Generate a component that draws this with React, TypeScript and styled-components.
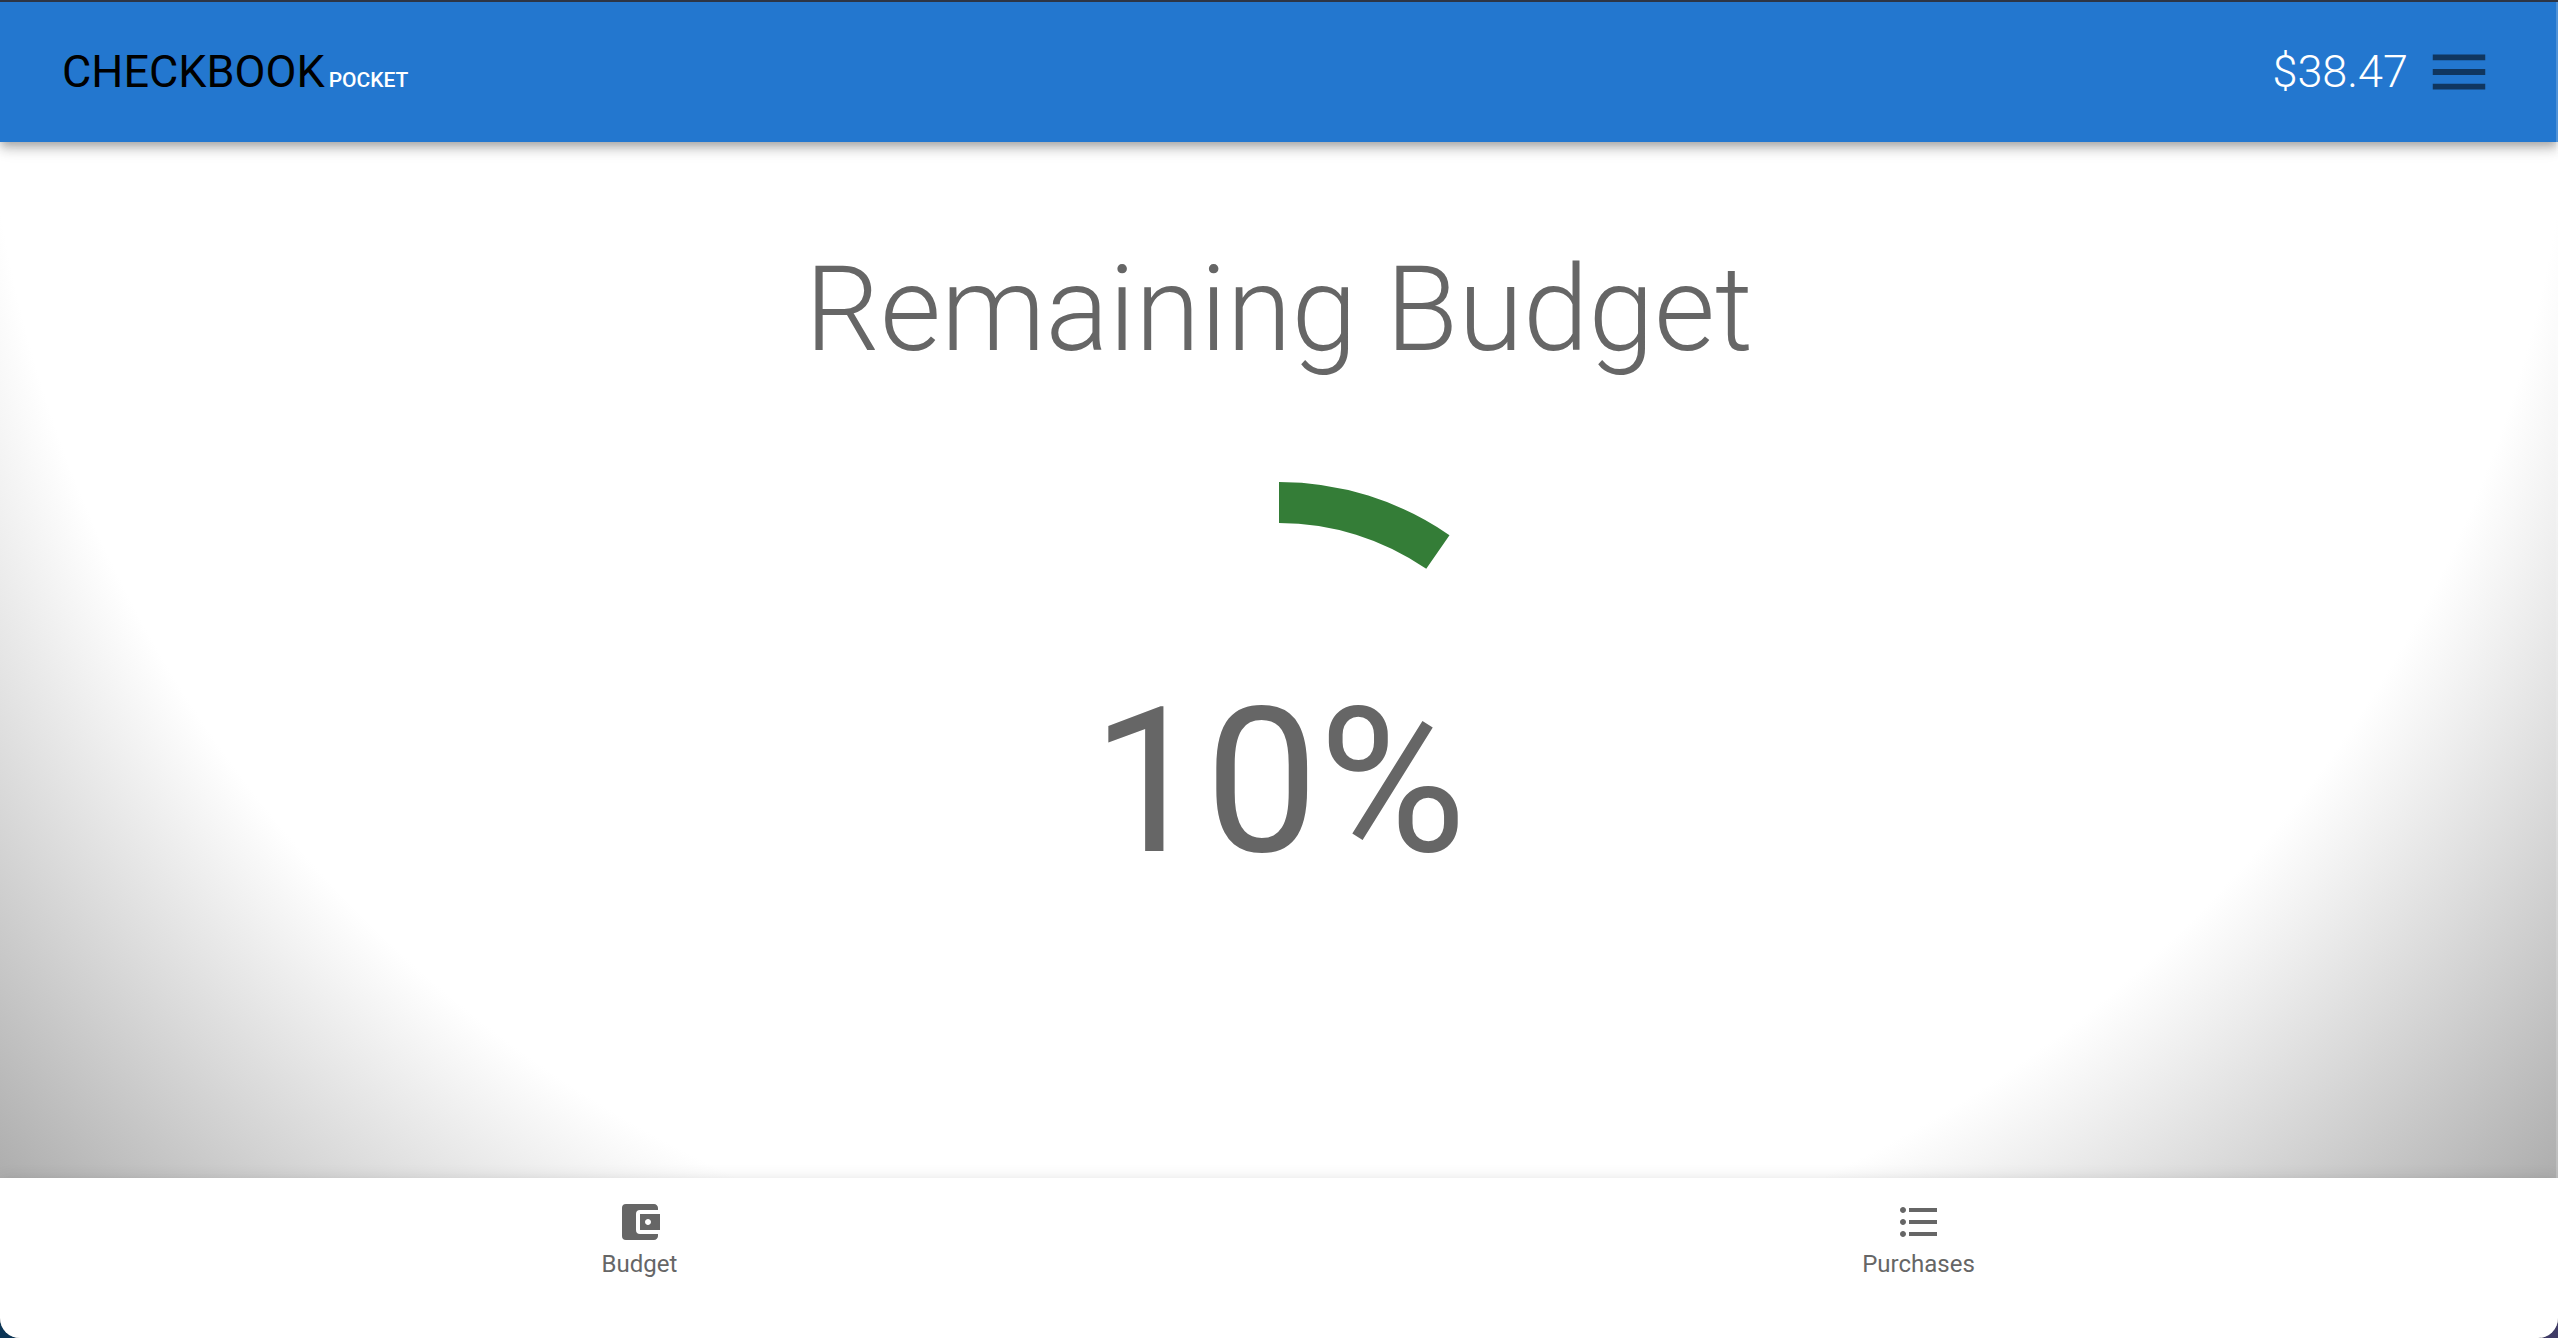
import React from "react";
import styled, { createGlobalStyle } from "styled-components";
import { MdAccountBalanceWallet, MdFormatListBulleted, MdMenu } from "react-icons/md";

const GlobalStyle = createGlobalStyle`
  *, *::before, *::after { box-sizing: border-box; }
  body {
    margin: 0;
    font-family: Roboto, "Noto Sans", sans-serif;
    background: linear-gradient(90deg, #0b3556, #3f3b66);
  }
`;

const Shell = styled.div`
  position: relative;
  display: flex;
  flex-direction: column;
  min-height: 100vh;
  border-top: 2px solid #2d3545;
  border-radius: 0 0 20px 20px;
  overflow: hidden;
  background: radial-gradient(circle at 50% 0%, #fff 70%, #999 100%) border-box;

  /* light edge of the window */
  &::after {
    content: "";
    position: absolute;
    inset: 0 0 0 auto;
    width: 2px;
    background: rgba(255, 255, 255, 0.2);
    pointer-events: none;
  }
`;

const AppBar = styled.header`
  display: flex;
  align-items: center;
  justify-content: space-between;
  height: 140px;
  padding: 0 64px 0 62px;
  background: #2377cf;
  box-shadow:
    0 4px 8px -2px rgba(0, 0, 0, 0.2),
    0 8px 10px rgba(0, 0, 0, 0.14),
    0 2px 20px rgba(0, 0, 0, 0.12);
`;

const Brand = styled.a`
  display: flex;
  align-items: baseline;
  gap: 4px;
  color: #000;
  font-size: 45px;
  font-weight: 400;
  line-height: 52px;
  text-decoration: none;
`;

const BrandSuffix = styled.span`
  color: #fff;
  font-size: 21px;
  font-weight: 500;
  line-height: 24px;
`;

const Account = styled.div`
  display: flex;
  align-items: center;
  gap: 16px;
`;

const Balance = styled.span`
  color: #fff;
  font-size: 45px;
  font-weight: 300;
  line-height: 52px;
`;

const MenuButton = styled.button`
  display: flex;
  padding: 0;
  border: 0;
  background: none;
  color: rgba(0, 0, 0, 0.54);
  font-size: 70px;
  cursor: pointer;
`;

const Main = styled.main`
  flex: 1;
  display: flex;
  flex-direction: column;
  align-items: center;
  gap: 100px;
  padding: 96px 32px;
  color: #666;
`;

const Title = styled.h1`
  margin: 0;
  font-size: 118px;
  font-weight: 300;
  line-height: 144px;
`;

const Gauge = styled.div`
  display: grid;
  place-items: center;
  width: 600px;
  aspect-ratio: 1;

  > * { grid-area: 1 / 1; }
`;

const Ring = styled.svg`
  width: 100%;
  height: 100%;
  transform: rotate(-90deg);
`;

const GaugeValue = styled.span`
  font-size: 202px;
  font-weight: 400;
  line-height: 240px;
`;

const BottomNav = styled.nav`
  display: flex;
  height: 160px;
  background: #fff;
  box-shadow:
    0 6px 6px -4px rgba(0, 0, 0, 0.2),
    0 6px 8px rgba(0, 0, 0, 0.14),
    0 2px 16px rgba(0, 0, 0, 0.12);
`;

const NavButton = styled.button`
  flex: 1;
  display: flex;
  flex-direction: column;
  align-items: center;
  padding: 20px 24px;
  border: 0;
  background: none;
  color: #666;
  font-family: inherit;
  font-size: 24px;
  line-height: 36px;
  cursor: pointer;
`;

const REMAINING = 38.47;
const BUDGET = 400;
const RADIUS = 20.5;
const CIRCUMFERENCE = 2 * Math.PI * RADIUS;

export default function App() {
  const ratio = REMAINING / BUDGET;
  return (
    <>
      <GlobalStyle />
      <Shell>
        <AppBar>
          <Brand href="#">
            CHECKBOOK<BrandSuffix>POCKET</BrandSuffix>
          </Brand>
          <Account>
            <Balance>${REMAINING}</Balance>
            <MenuButton type="button" aria-label="Open menu">
              <MdMenu />
            </MenuButton>
          </Account>
        </AppBar>
        <Main>
          <Title>Remaining Budget</Title>
          <Gauge>
            <Ring viewBox="0 0 44 44" aria-hidden="true">
              <circle
                cx="22"
                cy="22"
                r={RADIUS}
                fill="none"
                stroke="#347d37"
                strokeWidth="3"
                strokeDasharray={`${CIRCUMFERENCE * ratio} ${CIRCUMFERENCE}`}
              />
            </Ring>
            <GaugeValue>{Math.round(ratio * 100)}%</GaugeValue>
          </Gauge>
        </Main>
        <BottomNav>
          <NavButton type="button">
            <MdAccountBalanceWallet size={48} />
            Budget
          </NavButton>
          <NavButton type="button">
            <MdFormatListBulleted size={48} />
            Purchases
          </NavButton>
        </BottomNav>
      </Shell>
    </>
  );
}
